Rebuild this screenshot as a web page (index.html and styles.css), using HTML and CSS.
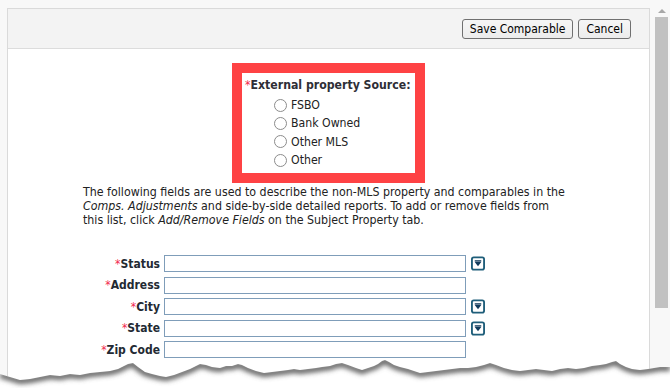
FILE: index.html
```html
<!DOCTYPE html>
<html>
<head>
  <meta charset="UTF-8">
  <title>Comparable</title>
  <link rel="stylesheet" href="styles.css">
</head>
<body>
  <div class="panel">
    <div class="panel-head">
      <button class="btn">Save Comparable</button>
      <button class="btn">Cancel</button>
    </div>
    <div class="panel-body">
      <div class="source-box">
        <div class="source-title"><span class="req">*</span>External property Source:</div>
        <label class="radio-row"><input type="radio" name="src"> FSBO</label>
        <label class="radio-row"><input type="radio" name="src"> Bank Owned</label>
        <label class="radio-row"><input type="radio" name="src"> Other MLS</label>
        <label class="radio-row"><input type="radio" name="src"> Other</label>
      </div>

      <p class="intro">The following fields are used to describe the non-MLS property and comparables in the<br>
        <i>Comps. Adjustments</i> and side-by-side detailed reports. To add or remove fields from<br>
        this list, click <i>Add/Remove Fields</i> on the Subject Property tab.</p>

      <div class="fields">
        <label class="fld-label"><span class="req">*</span>Status</label>
        <input class="fld-input" type="text">
        <span class="pick"><svg width="15" height="15" viewBox="0 0 15 15"><rect x="1" y="1" width="13" height="13" rx="2" fill="#fff" stroke="#1f5e7a" stroke-width="2"/><rect x="4" y="4" width="7" height="1.5" fill="#123b5c"/><polygon points="4,6 11,6 7.5,10.5" fill="#123b5c"/></svg></span>

        <label class="fld-label"><span class="req">*</span>Address</label>
        <input class="fld-input" type="text">
        <span></span>

        <label class="fld-label"><span class="req">*</span>City</label>
        <input class="fld-input" type="text">
        <span class="pick"><svg width="15" height="15" viewBox="0 0 15 15"><rect x="1" y="1" width="13" height="13" rx="2" fill="#fff" stroke="#1f5e7a" stroke-width="2"/><rect x="4" y="4" width="7" height="1.5" fill="#123b5c"/><polygon points="4,6 11,6 7.5,10.5" fill="#123b5c"/></svg></span>

        <label class="fld-label"><span class="req">*</span>State</label>
        <input class="fld-input" type="text">
        <span class="pick"><svg width="15" height="15" viewBox="0 0 15 15"><rect x="1" y="1" width="13" height="13" rx="2" fill="#fff" stroke="#1f5e7a" stroke-width="2"/><rect x="4" y="4" width="7" height="1.5" fill="#123b5c"/><polygon points="4,6 11,6 7.5,10.5" fill="#123b5c"/></svg></span>

        <label class="fld-label"><span class="req">*</span>Zip Code</label>
        <input class="fld-input" type="text">
        <span></span>
      </div>
    </div>
  </div>

  <div class="scrollbar">
    <div class="scroll-up"></div>
    <div class="scroll-thumb"></div>
  </div>

  <!-- torn paper edge over the bottom of the screenshot -->
  <svg class="torn" width="670" height="48" viewBox="0 340 670 48">
    <defs>
      <clipPath id="below">
        <path d="M0,374 L10,377 L20,380 L30,379 L40,377 L50,375 L60,376 L70,374 L80,375 L90,373 L100,372 L110,371 L118,369 L124,366 L128,364 L133,363 L138,367 L145,372 L152,374 L160,376 L166,377 L174,375 L182,372 L190,369 L196,366 L200,364 L206,365 L212,367 L220,368 L226,366 L232,366 L238,364 L242,365 L248,368 L256,371 L264,373 L272,372 L280,371 L288,370 L294,369 L300,370 L308,369 L316,368 L322,367 L330,366 L336,364 L342,363 L348,365 L356,368 L362,370 L368,368 L374,366 L378,364 L382,361 L385,360 L389,362 L394,365 L400,367 L408,369 L414,371 L420,373 L428,372 L436,371 L444,370 L452,369 L460,368 L468,368 L476,367 L484,365 L490,363 L496,365 L504,368 L512,370 L520,371 L528,370 L536,369 L544,370 L552,371 L560,369 L568,368 L576,369 L584,368 L592,366 L600,365 L606,364 L612,362 L616,361 L620,364 L626,367 L632,369 L640,370 L648,369 L654,368 L660,367 L670,367 L670,388 L0,388 Z"/>
      </clipPath>
      <filter id="soft" x="-5%" y="-50%" width="110%" height="200%">
        <feGaussianBlur stdDeviation="2.4"/>
      </filter>
    </defs>
    <g clip-path="url(#below)">
      <rect x="0" y="340" width="670" height="48" fill="#fff"/>
      <path filter="url(#soft)" fill="none" stroke="#5f5f5f" stroke-width="6" transform="translate(0,1)" d="M0,374 L10,377 L20,380 L30,379 L40,377 L50,375 L60,376 L70,374 L80,375 L90,373 L100,372 L110,371 L118,369 L124,366 L128,364 L133,363 L138,367 L145,372 L152,374 L160,376 L166,377 L174,375 L182,372 L190,369 L196,366 L200,364 L206,365 L212,367 L220,368 L226,366 L232,366 L238,364 L242,365 L248,368 L256,371 L264,373 L272,372 L280,371 L288,370 L294,369 L300,370 L308,369 L316,368 L322,367 L330,366 L336,364 L342,363 L348,365 L356,368 L362,370 L368,368 L374,366 L378,364 L382,361 L385,360 L389,362 L394,365 L400,367 L408,369 L414,371 L420,373 L428,372 L436,371 L444,370 L452,369 L460,368 L468,368 L476,367 L484,365 L490,363 L496,365 L504,368 L512,370 L520,371 L528,370 L536,369 L544,370 L552,371 L560,369 L568,368 L576,369 L584,368 L592,366 L600,365 L606,364 L612,362 L616,361 L620,364 L626,367 L632,369 L640,370 L648,369 L654,368 L660,367 L670,367"/>
    </g>
  </svg>
</body>
</html>
```

FILE: styles.css
```css
body {
  margin: 0;
  height: 388px;
  overflow: hidden;
  background: #f8f8f8;
  font-family: "DejaVu Sans Condensed", "DejaVu Sans", sans-serif;
  font-size: 12px;
  color: #222;
  display: flex;
  align-items: flex-start;
}
.panel {
  margin: 8px 0 0 7px;
  width: 641px;
  height: 380px;
  border: 1px solid #dadada;
  border-bottom: none;
  background: #fff;
}
.panel-head {
  height: 39px;
  background: #f3f3f3;
  border-bottom: 1px solid #dcdcdc;
  display: flex;
  justify-content: flex-end;
  align-items: center;
  gap: 5px;
  padding-right: 18px;
}
.btn {
  font-family: "DejaVu Sans Condensed", "DejaVu Sans", sans-serif;
  font-size: 12px;
  color: #000;
  height: 20px;
  padding: 0 7px;
  margin-top: 1px;
  background: linear-gradient(#f6f6f6, #ececec);
  border: 1px solid #707070;
  border-radius: 3px;
}
.panel-body {
  padding-top: 14px;
}
.source-box {
  width: 166px;
  margin: 0 auto;
  border: 10px solid #fe4244;
  padding: 5px 4px 4px 3px;
  font-size: 12.2px;
}
.source-title {
  font-weight: bold;
  color: #2e2e36;
  height: 18px;
}
.req {
  color: #f2284c;
  font-weight: normal;
}
.radio-row {
  display: flex;
  align-items: center;
  height: 18.3px;
  padding-left: 29px;
}
.radio-row input {
  appearance: none;
  width: 13px;
  height: 13px;
  margin: 0 4px 0 0;
  border: 1px solid #8c8c8c;
  border-radius: 50%;
  background: #fff;
}
.intro {
  margin: 2px 0 0 75px;
  line-height: 14px;
  font-size: 12.3px;
}
.fields {
  display: grid;
  grid-template-columns: 152px 302px 15px;
  grid-auto-rows: 17px;
  column-gap: 4px;
  row-gap: 4.5px;
  margin-top: 28px;
  align-items: center;
}
.fld-label {
  text-align: right;
  font-weight: bold;
  color: #232a33;
  white-space: nowrap;
}
.fld-input {
  box-sizing: border-box;
  height: 17px;
  width: 302px;
  margin: 0;
  border: 1px solid #7f9db9;
  padding: 0 2px;
}
.pick {
  display: flex;
  margin-left: 1px;
}
.scrollbar {
  margin: 0 0 0 3px;
  width: 17px;
  height: 388px;
}
.scroll-up {
  width: 0;
  height: 0;
  margin: 9px auto 4px;
  border-left: 4px solid transparent;
  border-right: 4px solid transparent;
  border-bottom: 4px solid #a8a8a8;
}
.scroll-thumb {
  width: 13px;
  height: 291px;
  margin-left: 2px;
  background: #c1c1c1;
}
.torn {
  position: absolute;
  left: 0;
  top: 340px;
}
```
